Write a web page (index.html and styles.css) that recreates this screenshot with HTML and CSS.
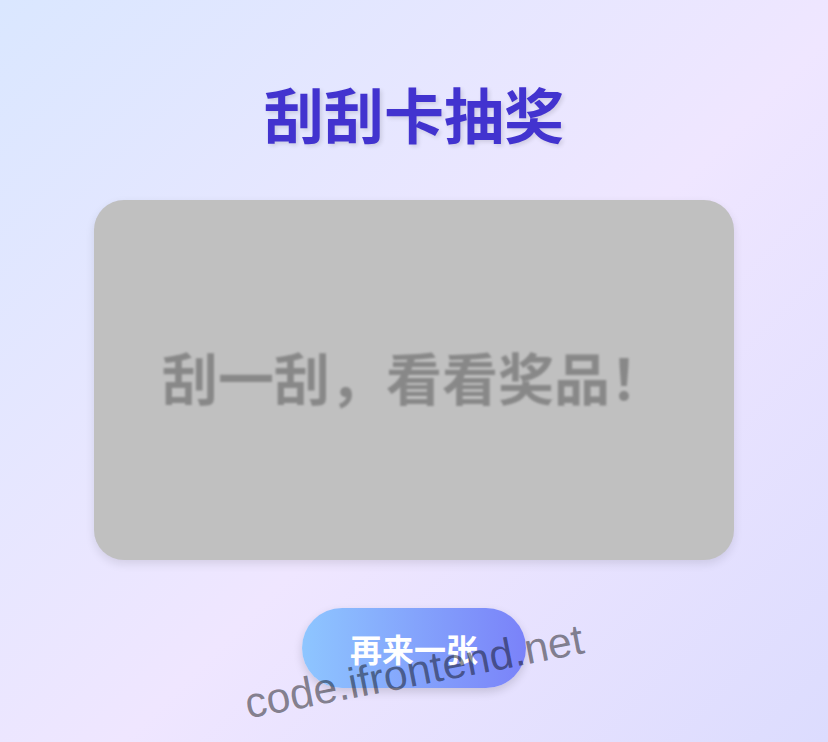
FILE: index.html
```html
<!DOCTYPE html>
<html lang="zh-CN">
<head>
<meta charset="utf-8">
<title>刮刮卡抽奖</title>
<link rel="stylesheet" href="styles.css">
</head>
<body>
<main class="page">
  <h1 class="title">刮刮卡抽奖</h1>
  <div class="card">
    <span class="card-text">刮一刮，看看奖品！</span>
  </div>
  <button class="again">再来一张</button>
</main>
<div class="watermark">code.ifrontend.net</div>
</body>
</html>
```
FILE: styles.css
```css
html, body {
  margin: 0;
  padding: 0;
}
body {
  min-height: 742px;
  background: linear-gradient(135deg, #dae7ff 0%, #efe6ff 55%, #dcdcfe 100%);
  font-family: "Noto Sans CJK SC", "Noto Sans", sans-serif;
  overflow: hidden;
}
.page {
  display: flex;
  flex-direction: column;
  align-items: center;
  padding-top: 83px;
}
.title {
  margin: 0 0 57px;
  font-size: 60px;
  line-height: 60px;
  font-weight: 700;
  color: #4233cf;
  text-shadow: 2px 2px 4px rgba(0, 0, 0, 0.12);
}
.card {
  box-sizing: border-box;
  width: 640px;
  height: 360px;
  padding-bottom: 9px;
  border-radius: 30px;
  background: #c0c0c0;
  box-shadow: 0 4px 10px rgba(0, 0, 0, 0.1);
  display: flex;
  align-items: center;
  justify-content: center;
}
.card-text {
  font-size: 56px;
  font-weight: 700;
  color: #888888;
  filter: blur(0.8px);
  white-space: nowrap;
}
.again {
  margin-top: 48px;
  width: 224px;
  height: 80px;
  border: none;
  border-radius: 40px;
  background: linear-gradient(90deg, #8ec6ff 0%, #7a82f9 100%);
  color: #ffffff;
  font-family: "Noto Sans CJK SC", "Noto Sans", sans-serif;
  font-size: 32px;
  font-weight: 700;
  box-shadow: 0 4px 10px rgba(0, 0, 0, 0.15);
  padding: 0;
}
.watermark {
  position: absolute;
  left: 0;
  right: 0;
  top: 647px;
  text-align: center;
  font-family: "Liberation Sans", Arial, sans-serif;
  font-size: 43px;
  line-height: 48px;
  color: rgba(0, 0, 0, 0.45);
  transform: rotate(-11deg);
  pointer-events: none;
}
```
